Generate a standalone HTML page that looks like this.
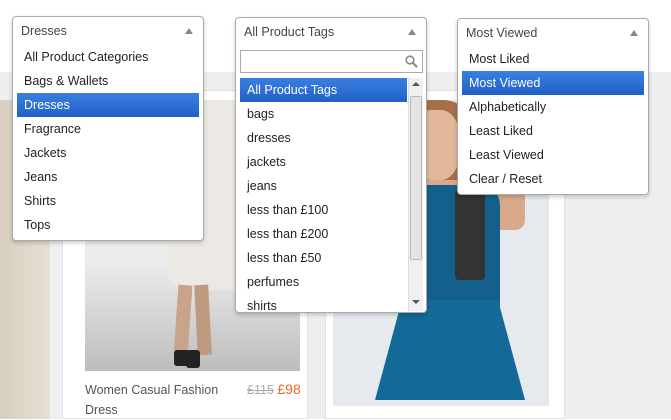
<!DOCTYPE html><html><head><style>
*{margin:0;padding:0;box-sizing:border-box}
body{width:671px;height:419px;overflow:hidden;position:relative;background:#fff;font-family:"Liberation Sans",sans-serif;font-size:12.5px;color:#222}
.abs{position:absolute}
.dd{position:absolute;background:#fff;border:1px solid #aaa;border-radius:4px;box-shadow:0 2px 4px rgba(0,0,0,.2)}
.hd{height:28px;line-height:28px;padding-left:8px;color:#444;position:relative}
.hd:after{content:"";position:absolute;right:10px;top:11px;border-left:4px solid transparent;border-right:4px solid transparent;border-bottom:6px solid #888}
.it{height:24px;line-height:25px;padding-left:7px}
.sel{background:linear-gradient(#3a80e0,#2160c8);color:#fff}
</style></head><body>
<div class="abs" style="left:0;top:72px;width:671px;height:347px;background:#efefef"></div>
<div class="abs" style="left:0;top:100px;width:50px;height:319px;background:linear-gradient(90deg,#d8cfbf,#e6dfd2)"></div>
<div class="abs" style="left:62px;top:90px;width:246px;height:329px;background:#fff;border:1px solid #e2e2e2"></div>
<div class="abs" style="left:85px;top:100px;width:215px;height:271px;background:linear-gradient(#f6f6f6,#ececec 60%,#bdbdbd)"></div>
<div class="abs" style="left:168px;top:100px;width:90px;height:190px;background:#ece9e4;border-radius:10px 10px 30px 20px"></div>
<div class="abs" style="left:176px;top:285px;width:14px;height:70px;background:#c9a48a;transform:rotate(4deg)"></div>
<div class="abs" style="left:196px;top:285px;width:14px;height:70px;background:#c09a80;transform:rotate(-3deg)"></div>
<div class="abs" style="left:174px;top:350px;width:16px;height:16px;background:#222;border-radius:3px"></div>
<div class="abs" style="left:186px;top:350px;width:14px;height:18px;background:#222;border-radius:3px"></div>
<div class="abs" style="left:85px;top:380px;color:#555;font-size:12.5px;line-height:20px">Women Casual Fashion<br>Dress</div>
<div class="abs" style="left:247px;top:381px;font-size:12.5px"><span style="color:#aaa;text-decoration:line-through">£115</span> <span style="color:#f26522;font-size:14px">£98</span></div>
<div class="abs" style="left:325px;top:90px;width:240px;height:329px;background:#fff;border:1px solid #e2e2e2"></div>
<div class="abs" style="left:333px;top:100px;width:216px;height:306px;background:#e6e9ee"></div>
<div class="abs" style="left:398px;top:100px;width:75px;height:140px;background:#a8704a;border-radius:30px 30px 10px 10px"></div>
<div class="abs" style="left:412px;top:110px;width:48px;height:70px;background:#e3b79a;border-radius:40%"></div>
<div class="abs" style="left:395px;top:180px;width:130px;height:50px;background:#d9a98b;border-radius:10px"></div>
<div class="abs" style="left:400px;top:185px;width:100px;height:140px;background:#14608c;border-radius:20px 20px 0 0"></div>
<div class="abs" style="left:375px;top:300px;width:150px;height:100px;background:#136a98;clip-path:polygon(18% 0,82% 0,100% 100%,0 100%)"></div>
<div class="abs" style="left:455px;top:190px;width:30px;height:90px;background:#333;border-radius:4px"></div>

<div class="dd" style="left:12px;top:16px;width:192px;height:225px">
<div class="hd">Dresses</div>
<div style="padding:0 4px">
<div class="it">All Product Categories</div><div class="it">Bags &amp; Wallets</div><div class="it sel">Dresses</div><div class="it">Fragrance</div><div class="it">Jackets</div><div class="it">Jeans</div><div class="it">Shirts</div><div class="it">Tops</div></div></div>

<div class="dd" style="left:235px;top:17px;width:192px;height:296px;overflow:hidden">
<div class="hd">All Product Tags</div>
<div class="abs" style="left:4px;top:32px;width:183px;height:23px;border:1px solid #aaa"><svg class="abs" style="right:4px;top:4px" width="13" height="13" viewBox="0 0 13 13"><circle cx="5" cy="5" r="3.8" fill="none" stroke="#888" stroke-width="1.6"/><path d="M8 8l4 4" stroke="#888" stroke-width="2"/></svg></div>
<div class="abs" style="left:4px;top:60px;width:167px">
<div class="it sel">All Product Tags</div><div class="it">bags</div><div class="it">dresses</div><div class="it">jackets</div><div class="it">jeans</div><div class="it">less than £100</div><div class="it">less than £200</div><div class="it">less than £50</div><div class="it">perfumes</div><div class="it">shirts</div></div>
<div class="abs" style="left:172px;top:60px;width:15px;height:233px;background:#f0f0f0;border-left:1px solid #ddd"></div>
<div class="abs" style="left:174px;top:78px;width:12px;height:164px;background:#e4e4e4;border:1px solid #bbb;border-radius:2px"></div>
<div class="abs" style="left:176px;top:64px;border-left:4px solid transparent;border-right:4px solid transparent;border-bottom:4px solid #555"></div>
<div class="abs" style="left:176px;top:282px;border-left:4px solid transparent;border-right:4px solid transparent;border-top:4px solid #555"></div>
</div>

<div class="dd" style="left:457px;top:18px;width:192px;height:177px">
<div class="hd">Most Viewed</div>
<div style="padding:0 4px">
<div class="it">Most Liked</div><div class="it sel">Most Viewed</div><div class="it">Alphabetically</div><div class="it">Least Liked</div><div class="it">Least Viewed</div><div class="it">Clear / Reset</div></div></div>
</body></html>
